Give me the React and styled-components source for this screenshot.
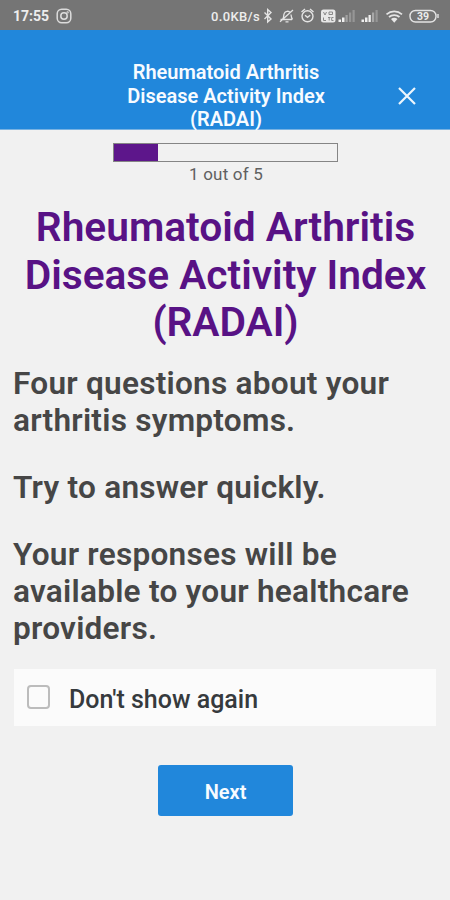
import React, { useState } from 'react';
import styled, { createGlobalStyle } from 'styled-components';

const App = () => {
    const [hidden, setHidden] = useState(false);
    const step = 1;
    const total = 5;

    return (
        <>
            <GlobalStyle />
            <Screen>
                <StatusBar />
                <Header>
                    <HeaderTitle>Rheumatoid Arthritis<br />Disease Activity Index<br />(RADAI)</HeaderTitle>
                    <CloseButton aria-label="Close">
                        <svg width="18" height="18" viewBox="0 0 18 18" stroke="#eef6fd" strokeWidth="2.2" fill="none">
                            <path d="M1 1L17 17M17 1L1 17" />
                        </svg>
                    </CloseButton>
                </Header>
                <Content>
                    <Progress>
                        <ProgressFill style={{ width: `${(step / total) * 100}%` }} />
                    </Progress>
                    <ProgressLabel>{step} out of {total}</ProgressLabel>
                    <Title>Rheumatoid Arthritis<br />Disease Activity Index<br />(RADAI)</Title>
                    <Intro>
                        <p>Four questions about your<br />arthritis symptoms.</p>
                        <p>Try to answer quickly.</p>
                        <p>Your responses will be<br />available to your healthcare<br />providers.</p>
                    </Intro>
                    <Option>
                        <Checkbox type="checkbox" checked={hidden} onChange={() => setHidden(!hidden)} />
                        <span>Don't show again</span>
                    </Option>
                    <NextButton>Next</NextButton>
                </Content>
            </Screen>
        </>
    );
}

const StatusBar = () => (
    <Status>
        <Clock>17:55</Clock>
        <CameraIcon />
        <Speed>0.0KB/s</Speed>
        <StatusIcons />
    </Status>
);

const CameraIcon = () => (
    <svg width="16" height="16" viewBox="0 0 16 16" fill="none" stroke="#dcdcdc" strokeWidth="1.5">
        <rect x="1.2" y="1.2" width="13.6" height="13.6" rx="4.5" />
        <circle cx="8" cy="8" r="3.2" />
        <circle cx="11.6" cy="4.4" r="0.4" />
    </svg>
);

// bluetooth, muted bell, alarm, VoLTE, two signals, wifi and battery
const StatusIcons = () => (
    <svg width="186" height="20" viewBox="262 6 186 20" fill="none" stroke="#e4e4e4" strokeWidth="1.4">
        <path d="M264.5 12.5l6.5 6.5-3.3 3V9.5l3.3 3-6.5 6.5" />
        <path d="M280.5 19.5h11.5M282.5 19.5c1.7-2 .8-4 1.7-6 1-2.6 4.6-3 6-1M291 14.5c.2 2 .2 3.3 1.5 5M285.5 21.8h3M293 10L280 21.8" strokeWidth="1.3" />
        <circle cx="307.5" cy="16.3" r="5.5" />
        <path d="M301.5 12l3.5-3M313.5 12l-3.5-3M305 15.3l2.5 2 2.7-2" />
        <rect x="321" y="9.5" width="14.5" height="13" rx="2.5" fill="#e8e8e8" stroke="none" />
        <path d="M323.5 12l1.5 3 1.5-3M329 12h3.5v2.5H329zM323.5 17.5v3h2.5M328 17.5h2.5M329.2 17.5v3M333.5 17.5h-1.8v3h1.8" stroke="#888" strokeWidth="1" />
        <g stroke="none" fill="#f0f0f0">
            <rect x="338.5" y="19.5" width="2.5" height="2.5" />
            <rect x="342" y="17.5" width="2.5" height="4.5" />
            <rect x="345.5" y="15" width="2.2" height="7" fill="#a2a2a2" />
            <rect x="349" y="12.5" width="2.2" height="9.5" fill="#969696" />
            <rect x="352.5" y="10" width="2.2" height="12" fill="#969696" />
            <rect x="361.5" y="19.5" width="2.5" height="2.5" />
            <rect x="365" y="17.5" width="2.5" height="4.5" />
            <rect x="368.5" y="15" width="2.3" height="7" />
            <rect x="372" y="12.5" width="2.2" height="9.5" fill="#a8a8a8" />
            <rect x="375.5" y="10" width="2.2" height="12" fill="#969696" />
        </g>
        <path d="M386.5 14.3c4.5-3.9 11-3.9 15.5 0M389 17c3-2.6 7.5-2.6 10.5 0" strokeWidth="1.7" />
        <path d="M391 19c2-1.6 4.5-1.6 6.5 0l-3.250 3.7z" fill="#e8e8e8" stroke="none" />
        <rect x="410" y="10.5" width="26" height="11.5" rx="5.5" />
        <path d="M438 14v4" strokeWidth="1.4" />
        <text x="423" y="20" textAnchor="middle" fill="#ececec" stroke="none" fontSize="10.5" fontWeight="700">39</text>
    </svg>
);

const GlobalStyle = createGlobalStyle`
    *{
        box-sizing: border-box;
        margin: 0;
        padding: 0;
    }
    body{
        background: #f1f1f1;
        font-family: Roboto, "Liberation Sans", sans-serif;
    }
`

const Screen = styled.div`
    width: 450px;
    height: 900px;
    overflow: hidden;
    background: #f1f1f1;
`

const Status = styled.div`
    display: flex;
    align-items: center;
    height: 30px;
    padding: 2px 2px 0 13px;
    background: #757575;
    color: #ededed;
`

const Clock = styled.span`
    font-size: 14px;
    font-weight: 700;
    margin-right: 7px;
`

const Speed = styled.span`
    margin-left: auto;
    font-size: 13px;
    font-weight: 500;
    letter-spacing: 0.35px;
    margin-right: 2px;
`

const Header = styled.header`
    display: grid;
    grid-template-columns: 86px 1fr 84px;
    height: 100px;
    border-bottom: 1px solid #78b2e2;
    background: #2187db;
`

const HeaderTitle = styled.h2`
    grid-column: 2;
    padding-top: 31px;
    color: #f7fbff;
    font-size: 20px;
    line-height: 23.7px;
    font-weight: 600;
    text-align: center;
    white-space: nowrap;
`

const CloseButton = styled.button`
    display: flex;
    align-items: center;
    justify-content: center;
    height: 40px;
    margin-top: 46px;
    padding-right: 3px;
    background: none;
    border: none;
    cursor: pointer;
`

const Content = styled.main`
    display: flex;
    flex-direction: column;
    align-items: center;
    padding: 13px 14px 0;
`

const Progress = styled.div`
    width: 225px;
    height: 19px;
    border: 1px solid #858585;
`

const ProgressFill = styled.div`
    height: 100%;
    background: #5d168b;
`

const ProgressLabel = styled.p`
    margin-top: 1px;
    padding-left: 2px;
    color: #606060;
    font-size: 17px;
    line-height: 22px;
    letter-spacing: 0.2px;
`

const Title = styled.h1`
    margin-top: 19px;
    padding-left: 1px;
    color: #581285;
    font-size: 40.7px;
    line-height: 47.6px;
    letter-spacing: -0.02px;
    font-weight: 600;
    text-align: center;
    white-space: nowrap;
`

const Intro = styled.section`
    align-self: stretch;
    display: grid;
    gap: 30.5px;
    margin: 19px 0 0 -1px;
    color: #464646;
    font-size: 31.6px;
    line-height: 36.8px;
    letter-spacing: 0.24px;
    font-weight: 600;
    white-space: nowrap;
`

const Option = styled.label`
    align-self: stretch;
    display: flex;
    align-items: center;
    height: 57px;
    margin-top: 21px;
    padding-left: 13px;
    background: #fbfbfb;
    color: #363a3d;
    font-size: 25px;
    font-weight: 500;

    span{
        margin: 4px 0 0 19px;
    }
`

const Checkbox = styled.input`
    appearance: none;
    width: 23px;
    height: 24px;
    border: 2px solid #bcbcbc;
    border-radius: 4px;
    background: #fbfbfb;

    &:checked{
        background: #2187db;
    }
`

const NextButton = styled.button`
    width: 135px;
    height: 51px;
    margin-top: 39px;
    padding: 3px 0 0 1px;
    border: none;
    border-radius: 3px;
    background: #2187db;
    color: #f7fbff;
    font-family: inherit;
    font-size: 20px;
    font-weight: 600;
    cursor: pointer;
`

export default App;
